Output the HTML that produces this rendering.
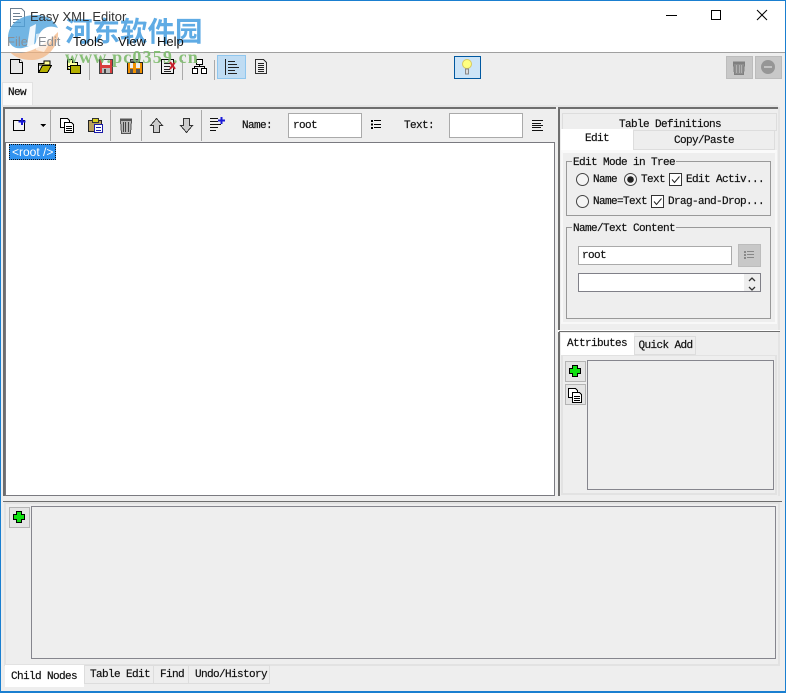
<!DOCTYPE html>
<html><head><meta charset="utf-8"><style>
html,body{margin:0;padding:0;background:#eee}
body{width:786px;height:693px;position:relative;overflow:hidden}
.b{position:absolute;box-sizing:border-box}
.t{position:absolute;white-space:pre;font:11px/12px "Liberation Mono",monospace;letter-spacing:-.6px;color:#111;-webkit-text-stroke:.2px #111}
.m{position:absolute;white-space:pre;font:13px/16px "Liberation Sans",sans-serif;color:#111}
.z{z-index:5}
</style></head><body>
<!-- window frame -->
<div class="b" style="left:0;top:0;width:786px;height:693px;background:#eee"></div>
<div class="b" style="left:0;top:0;width:786px;height:52px;background:#fff"></div>
<div class="b" style="left:0;top:52px;width:786px;height:1px;background:#a0a0a0"></div>

<div class="m z" style="left:30px;top:9px;color:#333">Easy XML Editor</div>
<div class="m z" style="left:7px;top:34px;color:#8a8f96">File</div>
<div class="m z" style="left:38px;top:34px;color:#8a8f96">Edit</div>
<div class="m z" style="left:73px;top:34px">Tools</div>
<div class="m z" style="left:118px;top:34px">View</div>
<div class="m z" style="left:157px;top:34px">Help</div>

<!-- toolbar buttons -->
<div class="b" style="left:89px;top:60px;width:1px;height:20px;background:#aaa"></div>
<div class="b" style="left:150px;top:60px;width:1px;height:20px;background:#aaa"></div>
<div class="b" style="left:182px;top:60px;width:1px;height:20px;background:#aaa"></div>
<div class="b" style="left:214px;top:60px;width:1px;height:20px;background:#aaa"></div>
<div class="b" style="left:217px;top:55px;width:29px;height:24px;background:#bfdcf3;border:1px solid #8fc6ee"></div>
<div class="b" style="left:454px;top:56px;width:27px;height:23px;background:#cce4f7;border:1px solid #0058a0"></div>
<div class="b" style="left:726px;top:56px;width:27px;height:23px;background:#c8c8c8;border:1px solid #bcbcbc"></div>
<div class="b" style="left:755px;top:56px;width:27px;height:23px;background:#c8c8c8;border:1px solid #bcbcbc"></div>

<!-- New tab -->
<div class="b" style="left:2px;top:82px;width:31px;height:24px;background:#fafafa;border:1px solid #e2e2e2;border-bottom:0"></div>
<div class="t" style="left:8px;top:87px">New</div>

<!-- outer main area -->
<div class="b" style="left:2px;top:105px;width:776px;height:2px;background:#e4e4e4"></div>
<div class="b" style="left:3px;top:107px;width:553px;height:2px;background:#6e6e6e"></div>
<div class="b" style="left:558px;top:107px;width:222px;height:2px;background:#6e6e6e"></div>
<div class="b" style="left:3px;top:107px;width:2px;height:389px;background:#6e6e6e"></div>
<div class="b" style="left:558px;top:107px;width:2px;height:389px;background:#6e6e6e"></div>
<div class="b" style="left:778px;top:107px;width:2px;height:389px;background:#e4e4e4"></div>

<!-- left toolbar -->
<div class="b" style="left:50px;top:110px;width:1px;height:31px;background:#aaa"></div>
<div class="b" style="left:110px;top:110px;width:1px;height:31px;background:#aaa"></div>
<div class="b" style="left:141px;top:110px;width:1px;height:31px;background:#aaa"></div>
<div class="b" style="left:201px;top:110px;width:1px;height:31px;background:#aaa"></div>
<div class="t" style="left:242px;top:120px">Name:</div>
<div class="b" style="left:288px;top:113px;width:74px;height:25px;background:#fff;border:1px solid #aaa"></div>
<div class="t" style="left:293px;top:120px">root</div>
<div class="t" style="left:404px;top:120px">Text:</div>
<div class="b" style="left:449px;top:113px;width:74px;height:25px;background:#fff;border:1px solid #aaa"></div>

<!-- tree -->
<div class="b" style="left:5px;top:142px;width:550px;height:354px;background:#fff;border:1px solid #7a7a80"></div>
<div class="b" style="left:9px;top:144px;width:47px;height:16px;background:#3092f0;border:1px dotted #111"></div>
<div class="m" style="left:12px;top:145px;color:#fff;font-size:12px;line-height:14px">&lt;root /&gt;</div>

<!-- right tabs -->
<div class="b" style="left:562px;top:113px;width:215px;height:18px;background:#eee;border:1px solid #ddd"></div>
<div class="t" style="left:619px;top:119px">Table Definitions</div>
<div class="b" style="left:633px;top:130px;width:142px;height:20px;background:#eee;border:1px solid #ddd"></div>
<div class="t" style="left:674px;top:135px">Copy/Paste</div>
<div class="b" style="left:561px;top:129px;width:72px;height:22px;background:#fff"></div>
<div class="t" style="left:585px;top:133px">Edit</div>
<div class="b" style="left:561px;top:150px;width:216px;height:174px;background:#eee;border:2px solid #f8f8f8;border-top:3px solid #fafafa"></div>

<!-- group 1 -->
<div class="b" style="left:566px;top:161px;width:205px;height:55px;border:1px solid #999"></div>
<div class="t" style="left:572px;top:157px;background:#eee;padding:0 1px">Edit Mode in Tree</div>
<div class="t" style="left:593px;top:174px">Name</div>
<div class="t" style="left:641px;top:174px">Text</div>
<div class="t" style="left:686px;top:174px">Edit Activ...</div>
<div class="t" style="left:593px;top:196px">Name=Text</div>
<div class="t" style="left:668px;top:196px">Drag-and-Drop...</div>

<!-- group 2 -->
<div class="b" style="left:566px;top:227px;width:205px;height:92px;border:1px solid #999"></div>
<div class="t" style="left:572px;top:223px;background:#eee;padding:0 1px">Name/Text Content</div>
<div class="b" style="left:578px;top:246px;width:154px;height:19px;background:#fff;border:1px solid #aaa"></div>
<div class="t" style="left:582px;top:250px">root</div>
<div class="b" style="left:738px;top:244px;width:23px;height:23px;background:#c8c8c8;border:1px solid #bcbcbc"></div>
<div class="b" style="left:578px;top:273px;width:183px;height:19px;background:#fff;border:1px solid #808088"></div>
<div class="b" style="left:744px;top:274px;width:16px;height:17px;background:#eee"></div>

<!-- attributes -->
<div class="b" style="left:558px;top:330px;width:222px;height:2px;background:#fff"></div>
<div class="b" style="left:559px;top:331px;width:221px;height:1px;background:#6e6e6e"></div>
<div class="b" style="left:634px;top:336px;width:62px;height:19px;background:#eee;border:1px solid #ddd"></div>
<div class="t" style="left:638.5px;top:340px">Quick Add</div>
<div class="b" style="left:561px;top:333px;width:73px;height:23px;background:#fff"></div>
<div class="t" style="left:567px;top:338px">Attributes</div>
<div class="b" style="left:561px;top:355px;width:216px;height:140px;background:#eee;border:2px solid #e2e2e2;border-top:1px solid #e2e2e2"></div>
<div class="b" style="left:587px;top:360px;width:187px;height:130px;background:#eee;border:1px solid #85858d"></div>
<div class="b" style="left:565px;top:361px;width:21px;height:21px;background:#e4e4e4;border:1px solid #b4b4b4"></div>
<div class="b" style="left:565px;top:384px;width:21px;height:21px;background:#e4e4e4;border:1px solid #b4b4b4"></div>

<!-- bottom -->
<div class="b" style="left:3px;top:501px;width:779px;height:1px;background:#6e6e6e"></div>
<div class="b" style="left:4px;top:502px;width:776px;height:164px;background:#eee;border:2px solid #e2e2e2"></div>
<div class="b" style="left:31px;top:506px;width:745px;height:153px;background:#eee;border:1px solid #85858d"></div>
<div class="b" style="left:9px;top:507px;width:21px;height:21px;background:#e4e4e4;border:1px solid #b4b4b4"></div>
<div class="b" style="left:84px;top:665px;width:70px;height:19px;background:#eee;border:1px solid #ddd"></div>
<div class="b" style="left:153px;top:665px;width:36px;height:19px;background:#eee;border:1px solid #ddd"></div>
<div class="b" style="left:188px;top:665px;width:82px;height:19px;background:#eee;border:1px solid #ddd"></div>
<div class="b" style="left:5px;top:665px;width:79px;height:22px;background:#fff"></div>
<div class="t" style="left:11px;top:671px">Child Nodes</div>
<div class="t" style="left:90px;top:669px">Table Edit</div>
<div class="t" style="left:160px;top:669px">Find</div>
<div class="t" style="left:195px;top:669px">Undo/History</div>

<!-- icons -->
<svg class="b" style="left:0;top:0" width="786" height="693" viewBox="0 0 786 693" shape-rendering="crispEdges">
<!-- title icon -->
<path d="M10.500 8.500H21.500L24.500 11.500V26.500H10.500Z" fill="#fff" stroke="#6d7f90"/><path d="M13 13.500h7M13 16.500h9M13 19.500h6M13 22.500h8" stroke="#6d7f90"/>
<!-- window buttons -->
<path d="M666 15.500H677" stroke="#000"/><rect x="711.500" y="10.500" width="9" height="9" fill="none" stroke="#000"/>
<g shape-rendering="auto"><path d="M757 10L767 20M767 10L757 20" stroke="#000" fill="none"/></g>
<!-- new -->
<path d="M10.500 59.500H19.500L22.500 62.500V73.500H10.500Z" fill="#e8e8e8" stroke="#000"/><path d="M19.500 59.500V62.500H22.500" fill="#fff" stroke="#000"/>
<!-- open -->
<path d="M38.500 72.500V63.500H44V61H50V65H38.500" fill="#ff9" stroke="#000"/><path d="M38.500 72.500L42.500 65.500H51.500L47.500 72.500Z" fill="#b5b000" stroke="#000"/>
<!-- open2 -->
<path d="M67.500 59.500H72.500V62.500H77.500V66.500H67.500Z" fill="#ffffa0" stroke="#000"/><path d="M70.500 65.500H80.500V73.500H70.500Z" fill="#b5b000" stroke="#000"/><path d="M67.500 66.500V69.500H70" fill="#b5b000" stroke="#000"/>
<!-- save -->
<path d="M99.500 59.500H112.500V73.500H99.500Z" fill="#d83c3c" stroke="#444"/><rect x="102" y="60" width="8" height="5" fill="#f4f4f4"/><rect x="102" y="68" width="8" height="5" fill="#bbb"/><rect x="104" y="69" width="2" height="4" fill="#444"/>
<!-- save all -->
<path d="M130.500 59.500H139.500V62H130.500Z" fill="#888" stroke="#333"/><path d="M127.500 62.500H142.500V73.500H127.500Z" fill="#f09000" stroke="#222"/><rect x="130" y="63" width="3" height="5" fill="#eee"/><rect x="136" y="63" width="4" height="5" fill="#eee"/><rect x="130" y="69" width="3" height="4" fill="#555"/><rect x="136" y="69" width="4" height="4" fill="#555"/>
<!-- doc x -->
<path d="M161.500 59.500H173.500V73.500H161.500Z" fill="#eee" stroke="#000"/><path d="M164 63.500h7M164 66.500h6M164 69.500h6M164 71.500h7" stroke="#222"/><g shape-rendering="auto"><path d="M170 62L175 69M175 62L170 69" stroke="#c8202c" stroke-width="2"/></g>
<!-- tree -->
<rect x="196.500" y="59.500" width="6" height="5" fill="#fff" stroke="#000"/><rect x="192.500" y="68.500" width="5" height="5" fill="#fff" stroke="#000"/><rect x="201.500" y="68.500" width="5" height="5" fill="#fff" stroke="#000"/><path d="M199.500 64.500V66.500H194.500V68.500M199.500 66.500H204.500V68.500" fill="none" stroke="#000"/>
<!-- align toggle -->
<path d="M225.500 59V75" stroke="#222"/><path d="M228 61.500h7M228 64.500h9M228 67.500h11M228 70.500h7M228 73.500h9" stroke="#222"/>
<!-- doc text -->
<path d="M255.500 59.500H263.500L266.500 62.500V73.500H255.500Z" fill="#eee" stroke="#333"/><path d="M258 63.500h6M258 65.500h6M258 67.500h6M258 69.500h6M258 71.500h6" stroke="#222"/>
<!-- bulb -->
<g shape-rendering="auto"><circle cx="467" cy="64" r="4.500" fill="#ffff80" stroke="#d8c860"/><rect x="465.500" y="69" width="3" height="5" fill="#ddd" stroke="#888"/></g>
<!-- disabled trash -->
<path d="M733.500 63.500H744.500L743.500 74.500H734.500Z" fill="#8e8e8e" stroke="#808080"/><path d="M733 62.500H745" stroke="#808080" stroke-width="2"/><path d="M736.500 65V73M739.500 65V73M741.500 65V73" stroke="#b0b0b0"/>
<g shape-rendering="auto"><circle cx="768" cy="67" r="7" fill="#969696"/></g><rect x="764" y="66" width="8" height="2" fill="#c2c2c2"/>
<!-- left toolbar: new+ -->
<path d="M13.500 120.500H24.500V130.500H13.500Z" fill="#f4f4f4" stroke="#000"/><path d="M22 118V125M18.500 121.500H25.500" stroke="#1a1ad8" stroke-width="2"/>
<path d="M40 124h6l-3 3z" fill="#000"/>
<!-- copy -->
<path d="M60.500 118.500H67.500L69.500 120.500V127.500H60.500Z" fill="#fff" stroke="#000"/><path d="M64.500 122.500H71.500L73.500 124.500V132.500H64.500Z" fill="#fff" stroke="#000"/><path d="M66 126.500h6M66 128.500h6M66 130.500h6" stroke="#000"/>
<!-- paste -->
<path d="M88.500 120.500H101.500V131.500H88.500Z" fill="#b8a060" stroke="#222"/><path d="M92.500 118.500H98.500V122.500H92.500Z" fill="#d8d020" stroke="#333"/><path d="M94.500 124.500H102.500V132.500H94.500Z" fill="#fff" stroke="#1a1aa8"/><path d="M96 127.500h5M96 130.500h5" stroke="#1a1aa8"/>
<!-- trash -->
<path d="M120.500 120.500H131.500L130.500 133.500H121.500Z" fill="#b8b8b8" stroke="#555"/><path d="M120 119.500H132" stroke="#555" stroke-width="2"/><path d="M123.500 122V132M125.500 122V132M128.500 122V132" stroke="#444"/>
<!-- arrows -->
<path d="M156.500 118.500L162.500 125.500H159.500V132.500H153.500V125.500H150.500Z" fill="#ccc" stroke="#333"/>
<path d="M183.500 118.500H189.500V125.500H192.500L186.500 132.500L180.500 125.500H183.500Z" fill="#ccc" stroke="#333"/>
<!-- add list -->
<path d="M210 118.500h8M210 121.500h8M210 124.500h11M210 127.500h8M210 130.500h6" stroke="#111"/><path d="M221.500 117V124M218 120.500H225" stroke="#1a1ad8" stroke-width="2"/>
<!-- list -->
<path d="M371 121h2M371 124.500h2M371 128h2" stroke="#000" stroke-width="2"/><path d="M374 120.500h7M374 124.500h7M374 127.500h7" stroke="#000"/>
<path d="M532 120.500h11M532 123.500h9M532 125.500h11M532 127.500h9M532 130.500h11" stroke="#111"/>
<!-- radios -->
<g shape-rendering="auto" fill="#f4f4f4" stroke="#444"><circle cx="582.500" cy="179.500" r="6"/><circle cx="630.500" cy="179.500" r="6"/><circle cx="582.500" cy="201.500" r="6"/></g>
<g shape-rendering="auto"><circle cx="630.500" cy="179.500" r="3.300" fill="#222"/></g>
<!-- checkboxes -->
<rect x="669.500" y="173.500" width="12" height="12" fill="#fff" stroke="#333"/><rect x="651.500" y="195.500" width="12" height="12" fill="#fff" stroke="#333"/>
<g shape-rendering="auto" fill="none" stroke="#222"><path d="M672 179.500l2.500 3 5-6"/><path d="M654 201.500l2.500 3 5-6"/></g>
<!-- list button -->
<path d="M744 252h2M744 255h2M744 258h2" stroke="#888" stroke-width="2"/><path d="M747 251.500h7M747 254.500h7M747 257.500h7" stroke="#888"/>
<!-- spinner -->
<g shape-rendering="auto" fill="none" stroke="#333" stroke-width="1.300"><path d="M749 281l3-3 3 3"/><path d="M749 287l3 3 3-3"/></g>
<!-- plus -->
<path d="M572.500 365.500H577.500V368.500H580.500V373.500H577.500V376.500H572.500V373.500H569.500V368.500H572.500Z" fill="#10e010" stroke="#000"/>
<path d="M16.500 511.500H21.500V514.500H24.500V519.500H21.500V522.500H16.500V519.500H13.500V514.500H16.500Z" fill="#10e010" stroke="#000"/>
<!-- copy attr -->
<path d="M568.500 388.500H575.500L577.500 390.500V397.500H568.500Z" fill="#fff" stroke="#000"/><path d="M572.500 392.500H579.500L581.500 394.500V402.500H572.500Z" fill="#fff" stroke="#000"/><path d="M574 396.500h6M574 398.500h6M574 400.500h6" stroke="#000"/>
<!-- frame -->
<rect x="0" y="0" width="786" height="1" fill="#1a7fd0"/><rect x="0" y="0" width="1" height="693" fill="#1a7fd0"/><rect x="785" y="0" width="1" height="693" fill="#1a7fd0"/><rect x="0" y="691" width="786" height="2" fill="#1a7fd0"/>
<!-- watermark logo -->
<g shape-rendering="auto">
<path d="M8 38C8 24 20 15 36 15C46 15 54 20 58 28C50 25 44 27 40 33L35 44L26 47C18 50 10 48 8 38Z" fill="#4fa2dc" opacity=".8"/>
<path d="M36 24L34 46L27 46L30 27Z" fill="#fff" opacity=".9"/>
<path d="M10 52C22 56 40 50 58 32C59 45 48 60 32 60C22 60 14 57 10 52Z" fill="#f4b27c" opacity=".7"/>
<path d="M36 34L58 30L44 52L36 50Z" fill="#fff" opacity=".65"/>
</g>
</svg>
<div class="b" style="left:65px;top:12px;white-space:pre;font:bold 27.500px/34px 'Noto Sans CJK SC',sans-serif;color:#4ea2e2;opacity:.9">河东软件园</div>
<div class="b" style="left:65px;top:48px;white-space:pre;font:bold 18px/18px 'Liberation Serif',serif;color:#7dbb6c;opacity:.9;letter-spacing:1.15px">www.pc0359.cn</div>
</body></html>
